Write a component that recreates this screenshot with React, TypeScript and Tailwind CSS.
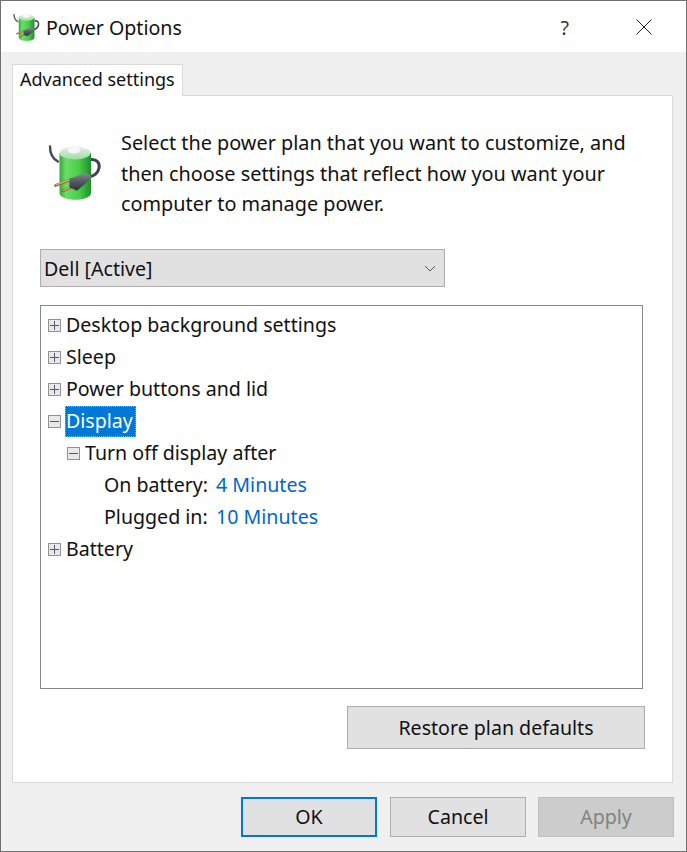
import React from "react";

function BatteryIcon({ size, id }: { size: number; id: string }) {
  return (
    <svg width={size} height={(size * 60) / 54} viewBox="0 0 54 60" className="block">
      <defs>
        <linearGradient id={id + "g"} x1="0" x2="1" y1="0" y2="0">
          <stop offset="0" stopColor="#35a63a" />
          <stop offset="0.2" stopColor="#6ade66" />
          <stop offset="0.6" stopColor="#4ccf4a" />
          <stop offset="1" stopColor="#1f8e2c" />
        </linearGradient>
        <linearGradient id={id + "p"} x1="0" x2="0" y1="0" y2="1">
          <stop offset="0" stopColor="#868a93" />
          <stop offset="0.45" stopColor="#5a5d66" />
          <stop offset="1" stopColor="#2e3138" />
        </linearGradient>
        <linearGradient id={id + "t"} x1="0" x2="0" y1="0" y2="1">
          <stop offset="0" stopColor="#e8eeea" />
          <stop offset="1" stopColor="#9fdca6" />
        </linearGradient>
      </defs>
      <path d="M2 6.5 C2 13 5 19 10 21.5" fill="none" stroke="#454856" strokeWidth="2.4" strokeLinecap="round" />
      <path d="M43 19.5 C49 19 52 23 51 28 C50 33 46 36 41 37" fill="none" stroke="#3f4250" strokeWidth="3" />
      <path d="M11.5 13 L11.5 53 C11.5 62 43 62 43 53 L43 13 Z" fill={`url(#${id}g)`} />
      <ellipse cx="27" cy="13" rx="15.5" ry="6.5" fill={`url(#${id}t)`} />
      <ellipse cx="26" cy="10" rx="6.5" ry="3.5" fill="#f6f7f7" />
      <path d="M22 40 L7.5 45.5" stroke="#8a6a34" strokeWidth="2.8" strokeLinecap="round" />
      <path d="M28 45 L15 50.8" stroke="#8a6a34" strokeWidth="2.8" strokeLinecap="round" />
      <path d="M22 39.6 L8 45" stroke="#d9b878" strokeWidth="1.2" strokeLinecap="round" />
      <path d="M28 44.6 L15.5 50.3" stroke="#d9b878" strokeWidth="1.2" strokeLinecap="round" />
      <path d="M21.5 38.7 L37.3 33 L43.5 36 L40 41.5 L29 50.7 L21.3 47.3 Z" fill={`url(#${id}p)`} />
    </svg>
  );
}

function Expander({ open }: { open?: boolean }) {
  return (
    <span className="w-[13px] h-[13px] border border-[#919191] bg-[#e8e8e8] relative block shrink-0">
      <span className="absolute left-[1px] top-[5px] w-[9px] h-[1px] bg-[#46587e]" />
      {!open && <span className="absolute left-[5px] top-[1px] w-[1px] h-[9px] bg-[#46587e]" />}
    </span>
  );
}

function Row({ label, open, sel }: { label: string; open?: boolean; sel?: boolean }) {
  return (
    <div className="h-8 flex items-center pl-[7px]">
      <Expander open={open} />
      {sel ? (
        <span className="ml-[4px] h-[31px] pr-[2px] flex items-center bg-[#0078d7] text-white border border-dotted border-[#e8a23c]">{label}</span>
      ) : (
        <span className="ml-[5px]">{label}</span>
      )}
    </div>
  );
}

export default function App() {
  return (
    <div className="w-[687px] h-[852px] bg-[#f0f0f0] border border-[#707070] flex flex-col text-[19.6px] text-[#111] font-['Noto_Sans',sans-serif] overflow-hidden">
      <div className="h-[51px] bg-white flex items-center shrink-0">
        <div className="ml-[12px] mt-[-2px]"><BatteryIcon size={27} id="a" /></div>
        <span className="ml-[6px] mt-[2px]">Power Options</span>
        <span className="ml-auto mr-[67px] text-[#333] mt-[2px]">?</span>
        <svg width="16" height="16" viewBox="0 0 16 16" className="mr-[34px]"><path d="M0.5 0.5 L15.5 15.5 M15.5 0.5 L0.5 15.5" stroke="#222" strokeWidth="1" fill="none" /></svg>
      </div>
      <div className="pl-[11px] pt-[12px] flex flex-col">
        <div className="w-[171px] h-[32px] bg-white border border-b-0 border-[#d9d9d9] flex items-center pl-[7px] pb-[2px] mb-[-1px] relative z-10 whitespace-nowrap text-[18px]">Advanced settings</div>
        <div className="w-[661px] h-[688px] bg-white border border-[#d9d9d9] pl-[27px] flex flex-col">
          <div className="flex pt-[32px] h-[153px]">
            <div className="ml-[8px] mt-[12px] w-[54px] shrink-0"><BatteryIcon size={54} id="b" /></div>
            <p className="ml-[19px] w-[520px] leading-[30.5px] text-[19.85px]">Select the power plan that you want to customize, and then choose settings that reflect how you want your computer to manage power.</p>
          </div>
          <div className="w-[405px] h-[38px] bg-[#e1e1e1] border border-[#adadad] flex items-center pl-[3px] pr-[8px] justify-between">
            <span className="mt-[2px]">Dell [Active]</span>
            <svg width="12" height="7" viewBox="0 0 12 7"><path d="M1 1 L6 6 L11 1" stroke="#555" strokeWidth="1" fill="none" /></svg>
          </div>
          <div className="w-[603px] h-[384px] mt-[18px] bg-white border border-[#828790] pt-[3px]">
            <Row label="Desktop background settings" />
            <Row label="Sleep" />
            <Row label="Power buttons and lid" />
            <Row label="Display" open sel />
            <div className="h-8 flex items-center pl-[26px]">
              <Expander open />
              <span className="ml-[5px]">Turn off display after</span>
            </div>
            <div className="h-8 flex items-center pl-[63px]">
              <span className="w-[112px]">On battery:</span>
              <span className="text-[#0066cc]">4 Minutes</span>
            </div>
            <div className="h-8 flex items-center pl-[63px]">
              <span className="w-[112px]">Plugged in:</span>
              <span className="text-[#0066cc]">10 Minutes</span>
            </div>
            <Row label="Battery" />
          </div>
          <div className="w-[605px] flex justify-end mt-[17px]">
            <button className="w-[298px] h-[43px] pt-[1px] bg-[#e1e1e1] border border-[#adadad]">Restore plan defaults</button>
          </div>
        </div>
      </div>
      <div className="flex pl-[240px] mt-[14px]">
        <button className="w-[136px] h-[40px] bg-[#e1e1e1] border-2 border-[#0078d7]">OK</button>
        <button className="ml-[13px] w-[136px] h-[40px] bg-[#e1e1e1] border border-[#adadad]">Cancel</button>
        <button className="ml-[12px] w-[136px] h-[40px] bg-[#cccccc] border border-[#bfbfbf] text-[#838383]">Apply</button>
      </div>
    </div>
  );
}
